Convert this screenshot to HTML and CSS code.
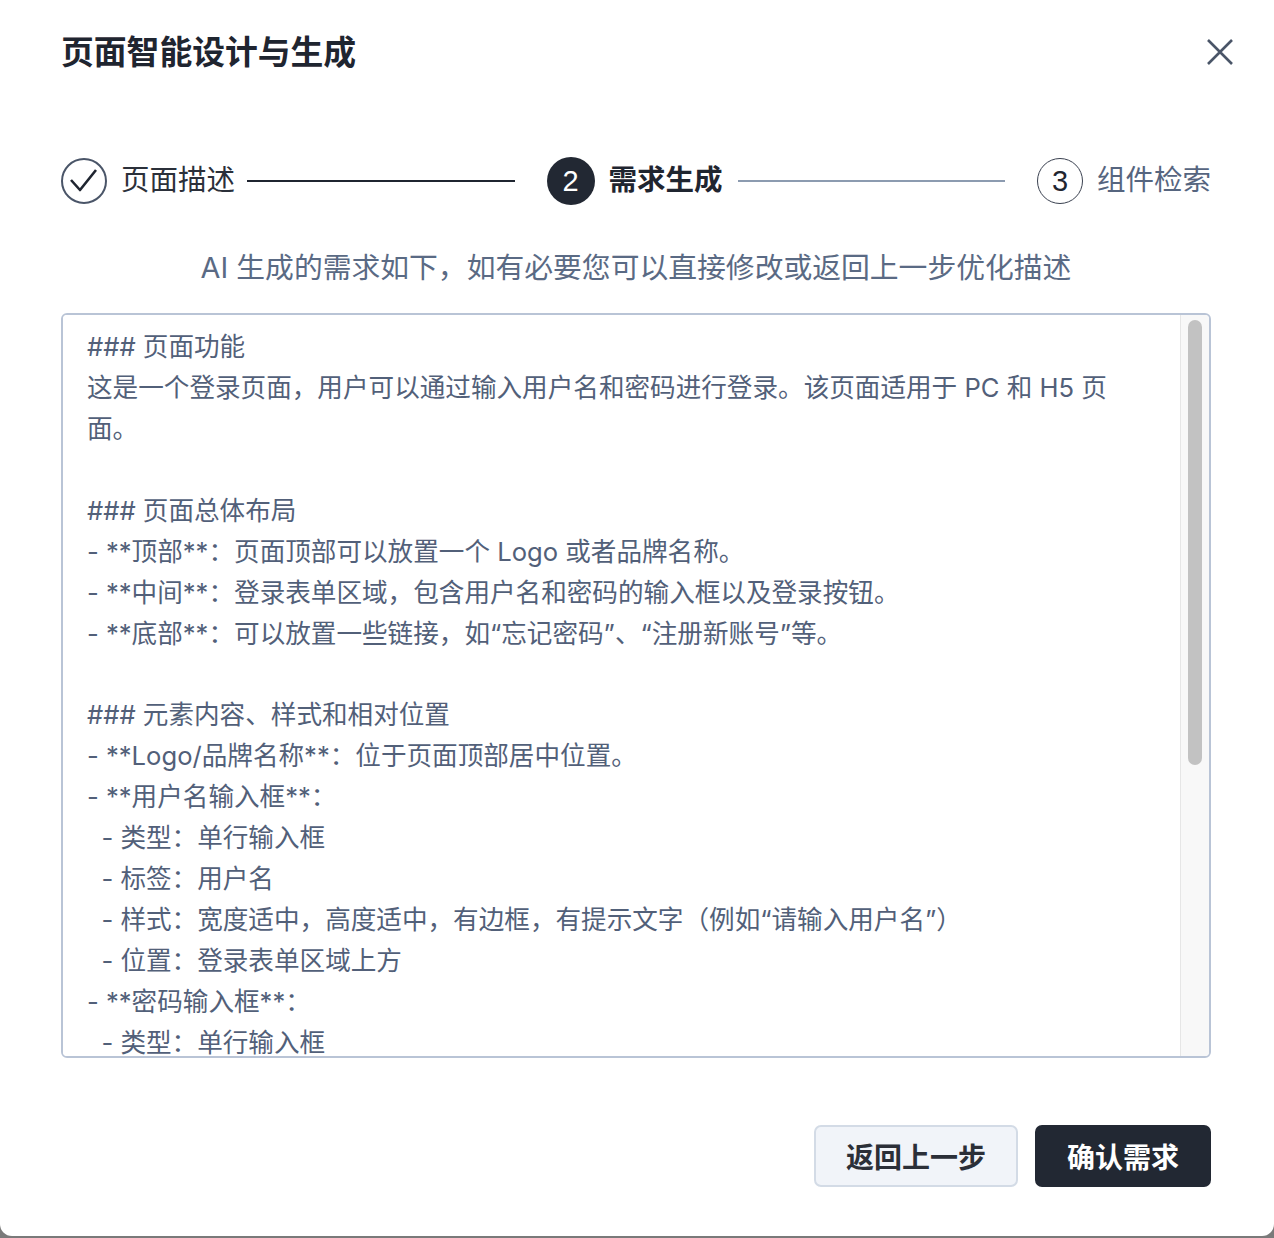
FILE: index.html
```html
<!DOCTYPE html>
<html lang="zh-CN">
<head>
    <meta charset="UTF-8">
    <meta name="viewport" content="width=device-width, initial-scale=1.0">
    <title>页面智能设计与生成</title>
    <link rel="stylesheet" href="styles.css">
</head>
<body>
    <div class="dialog">
        <div class="dialog-header">
            <h1>页面智能设计与生成</h1>
            <button class="close-btn" type="button" aria-label="关闭">
                <svg width="28" height="28" viewBox="0 0 28 28"><path d="M2 2 L26 26 M26 2 L2 26" stroke="#4a5568" stroke-width="2.6" fill="none"/></svg>
            </button>
        </div>

        <div class="steps">
            <div class="step done">
                <span class="step-icon">
                    <svg width="46" height="46" viewBox="0 0 46 46"><circle cx="23" cy="23" r="22" stroke="#4a5568" stroke-width="2" fill="none"/><path d="M10 22 L19 32 L35 12" stroke="#1f2530" stroke-width="2.6" fill="none" stroke-linejoin="round"/></svg>
                </span>
                <span class="step-label">页面描述</span>
            </div>
            <div class="step-line active"></div>
            <div class="step current">
                <span class="step-icon num">2</span>
                <span class="step-label">需求生成</span>
            </div>
            <div class="step-line"></div>
            <div class="step todo">
                <span class="step-icon num">3</span>
                <span class="step-label">组件检索</span>
            </div>
        </div>

        <p class="hint">AI 生成的需求如下，如有必要您可以直接修改或返回上一步优化描述</p>

        <div class="editor">
            <textarea class="requirement" spellcheck="false">### 页面功能
这是一个登录页面，用户可以通过输入用户名和密码进行登录。该页面适用于 PC 和 H5 页面。

### 页面总体布局
- **顶部**：页面顶部可以放置一个 Logo 或者品牌名称。
- **中间**：登录表单区域，包含用户名和密码的输入框以及登录按钮。
- **底部**：可以放置一些链接，如“忘记密码”、“注册新账号”等。

### 元素内容、样式和相对位置
- **Logo/品牌名称**：位于页面顶部居中位置。
- **用户名输入框**：
  - 类型：单行输入框
  - 标签：用户名
  - 样式：宽度适中，高度适中，有边框，有提示文字（例如“请输入用户名”）
  - 位置：登录表单区域上方
- **密码输入框**：
  - 类型：单行输入框
  - 标签：密码
  - 样式：宽度适中，高度适中，有边框，输入内容隐藏，有提示文字（例如“请输入密码”）
  - 位置：用户名输入框下方
- **登录按钮**：
  - 类型：按钮
  - 文本：登录
  - 样式：宽度与输入框一致，背景色突出，文字居中
  - 位置：密码输入框下方
- **底部链接**：
  - 内容：“忘记密码”、“注册新账号”
  - 位置：登录按钮下方，左右分布</textarea>
            <div class="scrollbar">
                <div class="scrollbar-thumb"></div>
            </div>
        </div>

        <div class="dialog-footer">
            <button class="btn btn-secondary" type="button">返回上一步</button>
            <button class="btn btn-primary" type="button">确认需求</button>
        </div>
    </div>
</body>
</html>
```

FILE: styles.css
```css
html, body {
    margin: 0;
    padding: 0;
}
body {
    background-color: #7a7a7a;
    font-family: Inter, "Noto Sans CJK SC", sans-serif;
    height: 1238px;
    overflow: hidden;
}
.dialog {
    background-color: #fff;
    height: 1236px;
    box-sizing: border-box;
    padding: 0 63px 0 61px;
    border-radius: 0 0 12px 12px;
    display: flex;
    flex-direction: column;
}
.dialog-header {
    display: flex;
    align-items: center;
    justify-content: space-between;
    padding-top: 32px;
    height: 40px;
}
.dialog-header h1 {
    margin: 0;
    font-size: 32.8px;
    line-height: 40px;
    font-weight: 700;
    color: #1f2530;
}
.close-btn {
    border: none;
    background: none;
    padding: 0;
    width: 28px;
    height: 28px;
    margin-right: -23px;
    cursor: pointer;
}
.close-btn svg {
    display: block;
}
.steps {
    display: flex;
    align-items: center;
    margin-top: 86px;
    height: 46px;
}
.step {
    display: flex;
    align-items: center;
    gap: 14px;
}
.step-icon {
    width: 46px;
    height: 46px;
    display: flex;
    align-items: center;
    justify-content: center;
    box-sizing: border-box;
    border-radius: 50%;
}
.step-icon svg {
    display: block;
}
.step-icon.num {
    font-size: 29px;
    font-family: "Liberation Sans", sans-serif;
}
.step.current .step-icon {
    width: 48px;
    height: 48px;
    background-color: #222833;
    color: #fff;
}
.step.todo .step-icon {
    border: 1.5px solid #3a4150;
    color: #1f2530;
}
.step-label {
    font-size: 28.5px;
    line-height: 40px;
    padding-bottom: 3px;
    color: #2b303a;
    white-space: nowrap;
}
.step.current .step-label {
    font-weight: 700;
    color: #1f2530;
}
.step.todo .step-label {
    color: #56657f;
}
.step-line {
    flex: 1;
    height: 2px;
    margin: 0 32px 0 12px;
    background-color: #8c9bb0;
}
.step.current + .step-line {
    margin-left: 15px;
}
.step-line.active {
    background-color: #1f2530;
}
.hint {
    margin: 44px 0 0;
    text-align: center;
    font-size: 28.8px;
    line-height: 40px;
    color: #5a6a84;
}
.editor {
    margin-top: 25px;
    height: 745px;
    box-sizing: border-box;
    border: 2px solid #b9c4d6;
    border-radius: 6px;
    display: flex;
    overflow: hidden;
}
.requirement {
    flex: 1;
    height: 100%;
    box-sizing: border-box;
    border: none;
    padding: 12px 40px 12px 24px;
    font-family: Inter, "Noto Sans CJK SC", sans-serif;
    font-size: 25.6px;
    line-height: 1.6;
    color: #526079;
    resize: none;
    outline: none;
    overflow: hidden;
}
.scrollbar {
    width: 29px;
    flex-shrink: 0;
    background-color: #f8f8f8;
    border-left: 1px solid #e6e6e6;
    padding: 5px 7px 0 7px;
    box-sizing: border-box;
}
.scrollbar-thumb {
    height: 445px;
    background-color: #c2c2c2;
    border-radius: 8px;
}
.dialog-footer {
    display: flex;
    justify-content: flex-end;
    gap: 17px;
    margin-top: 67px;
}
.btn {
    height: 62px;
    padding: 0 30px;
    border-radius: 7px;
    font-family: Inter, "Noto Sans CJK SC", sans-serif;
    font-size: 28px;
    font-weight: 700;
    cursor: pointer;
}
.btn-secondary {
    background-color: #f1f4f9;
    border: 2px solid #d3dbe6;
    color: #2b2f38;
}
.btn-primary {
    background-color: #222833;
    border: 2px solid #222833;
    color: #fff;
}
```
